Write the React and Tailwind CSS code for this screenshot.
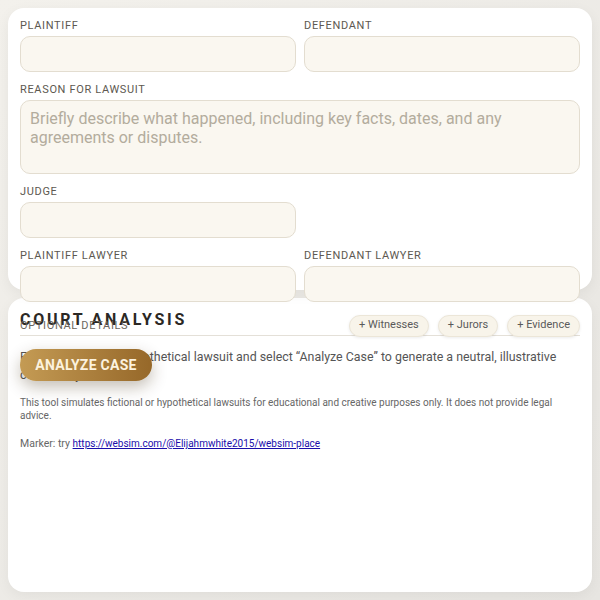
export default function App() {
  const label = 'block text-[11px] leading-[15px] uppercase tracking-[0.06em] text-[#5d5850] mb-[3px]';
  const input = 'block w-full h-9 rounded-[10px] border border-[#e3ddd0] bg-[#faf7f0] outline-none';

  return (
    <div className="h-screen flex flex-col gap-2 p-2 bg-gradient-to-br from-[#f3f1ec] to-[#e7e5e1] font-['Roboto',sans-serif]">
      <section className="relative z-10 h-[282px] shrink-0 rounded-2xl bg-white px-3 pt-2.5 shadow-[0_4px_14px_rgba(0,0,0,0.06)]">
        <div className="grid grid-cols-2 gap-x-2 gap-y-2.5">
          <div>
            <label className={label}>Plaintiff</label>
            <input className={input} />
          </div>
          <div>
            <label className={label}>Defendant</label>
            <input className={input} />
          </div>
          <div className="col-span-2">
            <label className={label}>Reason for lawsuit</label>
            <textarea
              className="block w-full h-[74px] resize-none rounded-[10px] border border-[#e3ddd0] bg-[#faf7f0] px-[9px] py-2 text-[16px] leading-[19px] text-[#333] placeholder:text-[#b3ac9d] outline-none"
              placeholder="Briefly describe what happened, including key facts, dates, and any agreements or disputes."
            />
          </div>
          <div>
            <label className={label}>Judge</label>
            <input className={input} />
          </div>
          <div />
          <div>
            <label className={label}>Plaintiff lawyer</label>
            <input className={input} />
          </div>
          <div>
            <label className={label}>Defendant lawyer</label>
            <input className={input} />
          </div>
          <div className="col-span-2 h-[27px] flex items-center justify-between">
            <span className="text-[11px] leading-[14px] uppercase tracking-[0.06em] text-[#6b665e]">Optional details</span>
            <div className="flex gap-[9px]">
              {['Witnesses', 'Jurors', 'Evidence'].map(c => (
                <button
                  key={c}
                  className="h-[22px] rounded-full border border-[#ece6d8] bg-[#f8f4ea] px-[9px] text-[11px] text-[#5a5a5a] shadow-[0_1px_3px_rgba(0,0,0,0.08)]"
                >
                  + {c}
                </button>
              ))}
            </div>
          </div>
          <div className="col-span-2">
            <button className="h-8 w-[132px] rounded-full bg-gradient-to-r from-[#c49b54] to-[#966829] text-[14px] font-bold tracking-[0.02em] text-[#fcf2de] shadow-[0_6px_16px_rgba(60,40,10,0.3)]">
              ANALYZE CASE
            </button>
          </div>
        </div>
      </section>

      <section className="flex-1 rounded-2xl bg-white px-3 pt-3 shadow-[0_4px_14px_rgba(0,0,0,0.05)]">
        <div className="border-b border-[#e4e0d8] pb-[5px]">
          <h2 className="text-[16px] leading-[20px] font-bold tracking-[0.17em] text-[#2b2824]">COURT ANALYSIS</h2>
        </div>
        <p className="mt-3 text-[12.4px] leading-[18px] text-[#555]">
          Enter a fictional or hypothetical lawsuit and select “Analyze Case” to generate a neutral, illustrative court analysis.
        </p>
        <p className="mt-3 text-[10px] leading-[13px] text-[#666]">
          This tool simulates fictional or hypothetical lawsuits for educational and creative purposes only. It does not provide legal advice.
        </p>
        <p className="mt-[15px] text-[10.5px] leading-[13px] text-[#666]">
          Marker: try{' '}
          <a href="#" className="text-[10px] text-[#1a0dab] underline">https://websim.com/@Elijahmwhite2015/websim-place</a>
        </p>
      </section>
    </div>
  );
}
